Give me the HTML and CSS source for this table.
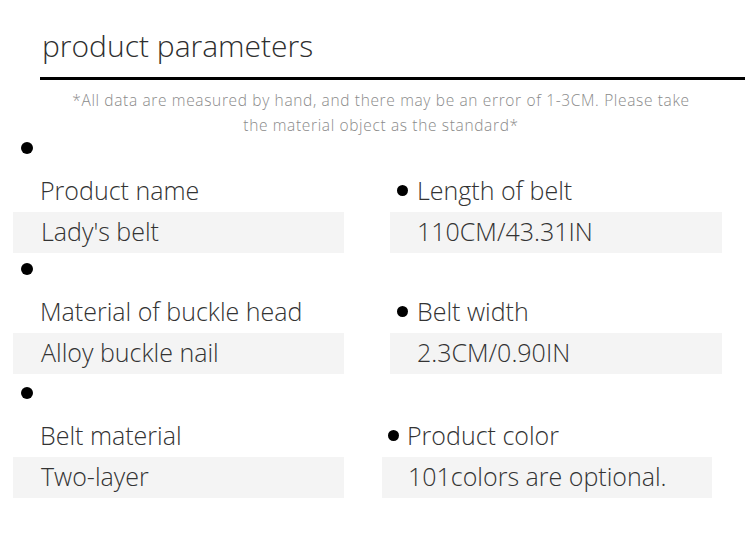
FILE: index.html
```html
<!DOCTYPE html>
<html>
<head>
<meta charset="utf-8">
<link rel="stylesheet" href="styles.css">
</head>
<body>
<div class="page">
  <header class="head">
    <h1 class="title">product parameters</h1>
  </header>
  <p class="note">*All data are measured by hand, and there may be an error of 1-3CM. Please take<br>the material object as the standard*</p>
  <div class="params">
    <div class="cell cell-left">
      <span class="dot dot-solo"></span>
      <div class="label">Product name</div>
      <div class="value">Lady's belt</div>
    </div>
    <div class="cell cell-right">
      <div class="label"><span class="dot"></span>Length of belt</div>
      <div class="value">110CM/43.31IN</div>
    </div>
    <div class="cell cell-left">
      <span class="dot dot-solo"></span>
      <div class="label">Material of buckle head</div>
      <div class="value">Alloy buckle nail</div>
    </div>
    <div class="cell cell-right">
      <div class="label"><span class="dot"></span>Belt width</div>
      <div class="value">2.3CM/0.90IN</div>
    </div>
    <div class="cell cell-left cell-last">
      <span class="dot dot-solo"></span>
      <div class="label">Belt material</div>
      <div class="value">Two-layer</div>
    </div>
    <div class="cell cell-right cell-shift cell-last">
      <div class="label"><span class="dot"></span>Product color</div>
      <div class="value">101colors are optional.</div>
    </div>
  </div>
</div>
</body>
</html>
```
FILE: styles.css
```css
html, body {
  margin: 0;
  padding: 0;
  background: #ffffff;
}
body {
  font-family: "Open Sans", "Noto Sans", sans-serif;
  font-weight: 300;
  color: #333333;
}
.page {
  width: 750px;
  height: 544px;
  overflow: hidden;
}
.head {
  margin: 0 5px 0 40px;
  padding-top: 24px;
  border-bottom: 3px solid #000000;
  height: 53px;
  box-sizing: content-box;
}
.title {
  margin: 0 0 0 2px;
  font-size: 30px;
  font-weight: 300;
  line-height: 44px;
  color: #2e2e2e;
}
.note {
  margin: 8px 0 0 0;
  text-align: center;
  font-size: 15.5px;
  letter-spacing: 0.65px;
  line-height: 25px;
  color: #8a8a8a;
  padding-left: 12px;
}
.params {
  display: grid;
  grid-template-columns: 331px 332px;
  column-gap: 46px;
  row-gap: 10px;
  margin: 4px 0 0 13px;
}
.cell {
  display: flex;
  flex-direction: column;
}
.cell-right {
  align-self: end;
}
.cell-last {
  margin-top: 3px;
}
.cell-shift {
  margin-left: -8px;
  width: 330px;
}
.dot {
  display: inline-block;
  width: 11px;
  height: 11px;
  border-radius: 50%;
  background: #000000;
  flex: none;
}
.dot-solo {
  display: block;
  margin: 0 0 20px 8px;
  height: 12px;
  width: 12px;
}
.label {
  display: flex;
  align-items: center;
  height: 32px;
  margin-bottom: 6px;
  font-size: 25px;
  color: #333333;
  padding-left: 27px;
  white-space: nowrap;
}
.cell-right .label {
  padding-left: 7px;
  gap: 9px;
}
.cell-shift .label {
  padding-left: 6px;
  gap: 8px;
}
.value {
  height: 41px;
  line-height: 39px;
  background: #f4f4f4;
  font-size: 25px;
  color: #333333;
  padding-left: 28px;
  white-space: nowrap;
}
.cell-right .value {
  padding-left: 27px;
}
.cell-shift .value {
  padding-left: 26px;
}
```
